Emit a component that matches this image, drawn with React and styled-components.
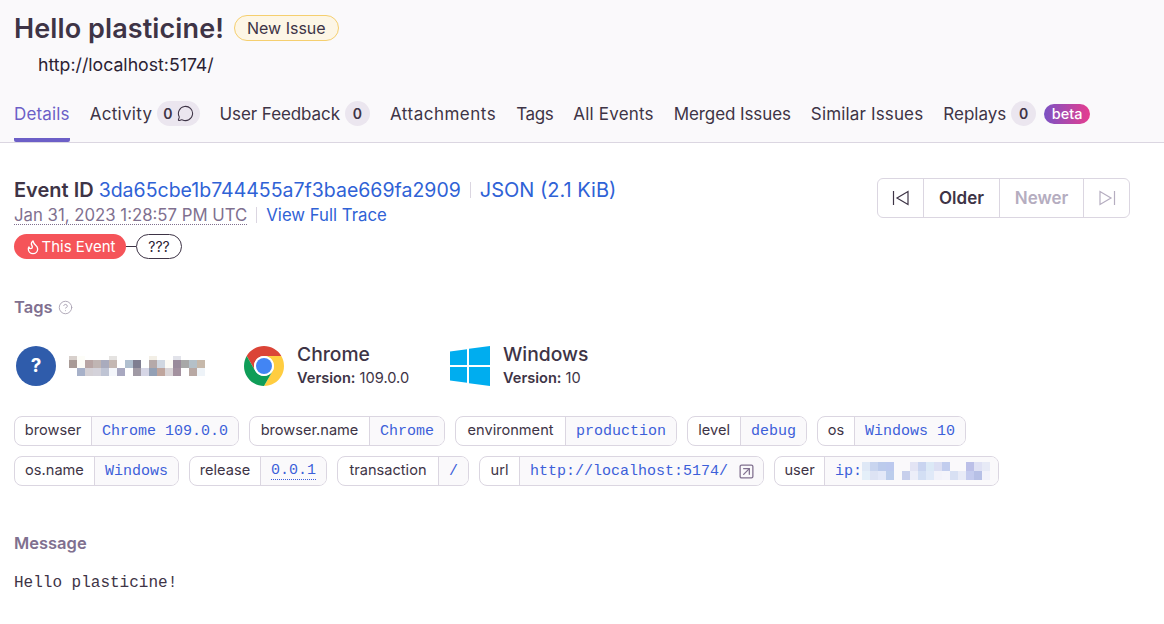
import styled, { createGlobalStyle } from "styled-components"
import { Flame, MessageCircle, CircleHelp, SquareArrowUpRight } from "lucide-react"

const GlobalStyle = createGlobalStyle`
    body{
        margin: 0;
        background-color: #ffffff;
        color: #2b2233;
        font-family: "Inter", "Liberation Sans", sans-serif;
    }
`

const tabs = [
    { label: "Details", active: true, spacing: 0.15 },
    { label: "Activity", count: "0", comment: true, spacing: 0.3 },
    { label: "User Feedback", count: "0", spacing: -0.08 },
    { label: "Attachments", spacing: 0.5 },
    { label: "Tags", spacing: -0.4 },
    { label: "All Events", spacing: 0.2 },
    { label: "Merged Issues", spacing: -0.1 },
    { label: "Similar Issues", spacing: 0.15 },
    { label: "Replays", count: "0", beta: true },
]

const tagRows = [
    [
        { name: "browser", width: 77, value: "Chrome 109.0.0" },
        { name: "browser.name", width: 120, value: "Chrome" },
        { name: "environment", width: 110, value: "production" },
        { name: "level", width: 53, value: "debug" },
        { name: "os", width: 37, value: "Windows 10" },
    ],
    [
        { name: "os.name", width: 80, value: "Windows" },
        { name: "release", width: 71, value: "0.0.1", dotted: true },
        { name: "transaction", width: 101, value: "/" },
        { name: "url", width: 40, value: "http://localhost:5174/", external: true },
        { name: "user", width: 50, value: "ip:", hidden: true },
    ],
]

// pixelated user name: [column, row, colour]
const userPixels = [
    [0, 0, "#d8d0cc"], [1, 0, "#fdfdf8"], [5, 0, "#e5e3e1"], [10, 0, "#f3efe6"], [13, 0, "#e2e3ea"],
    [0, 1, "#a89a96"], [1, 1, "#fdfdf8"], [2, 1, "#b8a5a4"], [3, 1, "#c0b5b3"], [4, 1, "#a9abbd"], [5, 1, "#c4b7b2"],
    [7, 1, "#b0bfcf"], [8, 1, "#7f7e91"], [10, 1, "#b5a9a9"], [11, 1, "#d0d7e1"], [12, 1, "#fcfaf4"],
    [13, 1, "#9a8b9b"], [14, 1, "#a8a8a8"], [15, 1, "#b4c0c8"], [16, 1, "#c6b8aa"],
    [1, 2, "#a7b1c9"], [2, 2, "#d4d0d5"], [3, 2, "#d4d2da"], [4, 2, "#bfc4d4"], [5, 2, "#f4f6fb"], [6, 2, "#a8a8c0"],
    [8, 2, "#a09aa5"], [9, 2, "#d6d6e6"], [10, 2, "#93a0b5"], [11, 2, "#bfa59d"], [12, 2, "#d9d4d7"], [13, 2, "#a3919f"],
    [15, 2, "#b8a8a3"], [16, 2, "#eef3f8"],
]

const ipPixels = [
    [0, 0, "#dfe8f6"], [1, 0, "#c9d5ef"], [2, 0, "#bccbec"], [3, 0, "#bcc9ee"], [6, 0, "#e3e4f4"], [7, 0, "#c9d4f0"],
    [8, 0, "#dce9f6"], [9, 0, "#dcdff3"], [10, 0, "#c2cdee"], [13, 0, "#bcc0e8"], [14, 0, "#dfe1f4"], [15, 0, "#e7eaf6"],
    [0, 1, "#e4eff9"], [1, 1, "#dde3f4"], [2, 1, "#e3e8f8"], [3, 1, "#bccdec"], [5, 1, "#c7cfec"], [6, 1, "#eceef9"],
    [7, 1, "#d3dff4"], [8, 1, "#e0e9f8"], [9, 1, "#f2f2fa"], [10, 1, "#f4f4fb"], [11, 1, "#d8e0f3"], [12, 1, "#e8ebf7"],
    [13, 1, "#c4cbee"], [14, 1, "#b7c0e6"], [15, 1, "#f2f2fa"],
]

export default function App(){
    return(
        <>
        <GlobalStyle />
        <Header>
            <TitleRow>
                <Title>Hello plasticine!</Title>
                <IssueBadge>New Issue</IssueBadge>
            </TitleRow>
            <Culprit>http://localhost:5174/</Culprit>
            <TabList>
                {tabs.map((tab) => <Tab key={tab.label} $active={tab.active}>
                    <TabLabel $spacing={tab.spacing}>{tab.label}</TabLabel>
                    {tab.count && <Count>
                        {tab.count}
                        {tab.comment && <MessageCircle size={17} strokeWidth={1.5} />}
                    </Count>}
                    {tab.beta && <Beta>beta</Beta>}
                </Tab>)}
            </TabList>
        </Header>
        <Main>
            <EventRow>
                <EventInfo>
                    <EventTitle>
                        Event ID <EventLink $size={19.5}>3da65cbe1b744455a7f3bae669fa2909</EventLink>
                        <Divider $tight />
                        <EventLink>JSON (2.1 KiB)</EventLink>
                    </EventTitle>
                    <EventDate>
                        <DateText>Jan 31, 2023 1:28:57 PM UTC</DateText>
                        <Divider />
                        <EventLink>View Full Trace</EventLink>
                    </EventDate>
                    <Trail>
                        <ThisEvent><Flame size={16} strokeWidth={2} />This Event</ThisEvent>
                        <Connector />
                        <Unknown>???</Unknown>
                    </Trail>
                </EventInfo>
                <Pager>
                    <PagerIcon $width={46} $border>
                        <svg width="18" height="16" viewBox="0 0 18 16" fill="none" stroke="#3e3446" strokeWidth="1.2">
                            <path d="M1.5 1v14" />
                            <path d="M16 1.5v13L5 8z" />
                        </svg>
                    </PagerIcon>
                    <PagerButton $width={76}>Older</PagerButton>
                    <PagerButton $width={84} $disabled>Newer</PagerButton>
                    <PagerIcon $width={45}>
                        <svg width="18" height="16" viewBox="0 0 18 16" fill="none" stroke="#b5adc0" strokeWidth="1.2">
                            <path d="M16.5 1v14" />
                            <path d="M2 1.5v13L13 8z" />
                        </svg>
                    </PagerIcon>
                </Pager>
            </EventRow>

            <Heading>Tags <CircleHelp size={15} strokeWidth={1.4} color="#a79fb0" /></Heading>

            <ContextRow>
                <ContextItem $width={228}>
                    <UnknownUser>?</UnknownUser>
                    <svg width="136" height="24" viewBox="0 0 136 24" shapeRendering="crispEdges">
                        {userPixels.map(([x, y, color]) => <rect key={x + "-" + y} x={x * 8} y={y === 0 ? 2 : y === 1 ? 6 : 14} width="8" height={y === 0 ? 4 : 8} fill={color} />)}
                    </svg>
                </ContextItem>
                <ContextItem $width={206}>
                    <svg width="40" height="40" viewBox="0 0 40 40">
                        <path d="M2.68 10A20 20 0 0 1 37.32 10H20A10 10 0 0 0 11.34 25Z" fill="#db4437" />
                        <path d="M2.68 10A20 20 0 0 1 37.32 10H20A10 10 0 0 0 11.34 25Z" fill="#ffcd40" transform="rotate(120 20 20)" />
                        <path d="M2.68 10A20 20 0 0 1 37.32 10H20A10 10 0 0 0 11.34 25Z" fill="#0f9d58" transform="rotate(240 20 20)" />
                        <circle cx="20" cy="20" r="10" fill="#ffffff" />
                        <circle cx="20" cy="20" r="8" fill="#4285f4" />
                    </svg>
                    <div>
                        <ContextName>Chrome</ContextName>
                        <ContextVersion><b>Version:</b> 109.0.0</ContextVersion>
                    </div>
                </ContextItem>
                <ContextItem>
                    <svg width="40" height="40" viewBox="0 0 40 40" fill="#00adef">
                        <path d="M0 5.6L17 3.2V19H0z" />
                        <path d="M19 2.8L40 0V19H19z" />
                        <path d="M0 21H17V36.8L0 34.4z" />
                        <path d="M19 21H40V40L19 37.2z" />
                    </svg>
                    <div>
                        <ContextName>Windows</ContextName>
                        <ContextVersion><b>Version:</b> 10</ContextVersion>
                    </div>
                </ContextItem>
            </ContextRow>

            <TagList>
                {tagRows.map((row, i) => <TagRow key={i}>
                    {row.map((tag) => <TagPill key={tag.name}>
                        <TagKey $width={tag.width}>{tag.name}</TagKey>
                        <TagValue $dotted={tag.dotted} $external={tag.external} $hidden={tag.hidden}>
                            <span>{tag.value}</span>
                            {tag.hidden && <svg width="128" height="20" viewBox="0 0 128 20" shapeRendering="crispEdges">
                                {ipPixels.map(([x, y, color]) => <rect key={x + "-" + y} x={x * 8} y={y * 9 + 1} width="8" height="9" fill={color} />)}
                            </svg>}
                            {tag.external && <SquareArrowUpRight size={17} strokeWidth={1.8} color="#80708f" />}
                        </TagValue>
                    </TagPill>)}
                </TagRow>)}
            </TagList>

            <Heading $message>Message</Heading>
            <Code>Hello plasticine!</Code>
        </Main>
        </>
    )
}

const Header = styled.header`
    height: 130px;
    background-color: #faf9fb;
    border-bottom: 1px solid #dbd6e1;
    padding: 12px 14px 0;
    display: flex;
    flex-direction: column;
`

const TitleRow = styled.div`
    display: flex;
    align-items: center;
    gap: 10px;
    height: 32px;
`

const Title = styled.h1`
    margin: 0;
    font-size: 27px;
    font-weight: 600;
    color: #3e3446;
    letter-spacing: 0.1px;
`

const IssueBadge = styled.span`
    height: 24px;
    padding: 0 12px;
    display: flex;
    align-items: center;
    font-size: 16px;
    color: #3e3446;
    background-color: #fdf6e6;
    border: 1px solid #f5cf6f;
    border-radius: 13px;
`

const Culprit = styled.div`
    margin-top: 10px;
    padding-left: 24px;
    font-size: 17.7px;
    color: #2b2233;
`

const TabList = styled.nav`
    margin-top: auto;
    display: flex;
    gap: 20px;
    height: 53px;
`

const Tab = styled.div`
    height: 100%;
    box-sizing: border-box;
    display: flex;
    align-items: center;
    gap: 5px;
    font-size: 17px;
    color: ${(props) => props.$active ? "#6c5fc7" : "#3e3446"};
    border-bottom: 4px solid ${(props) => props.$active ? "#6c5fc7" : "transparent"};
    border-radius: 0 0 2px 2px;
`

const TabLabel = styled.span`
    letter-spacing: ${(props) => props.$spacing || 0}px;
`

const Count = styled.span`
    min-width: 25px;
    height: 25px;
    box-sizing: border-box;
    padding: 0 6px;
    display: flex;
    align-items: center;
    justify-content: center;
    gap: 4px;
    font-size: 14px;
    font-weight: 600;
    color: #3e3446;
    background-color: #ebe6ef;
    border-radius: 13px;
`

const Beta = styled.span`
    margin-left: 3px;
    width: 46px;
    height: 20px;
    display: flex;
    align-items: center;
    justify-content: center;
    font-size: 14.5px;
    font-weight: 500;
    color: #ffffff;
    background: linear-gradient(90deg, #7b52c4, #e63d8f);
    border-radius: 10px;
`

const Main = styled.main`
    padding: 34px 34px 0 14px;
`

const EventRow = styled.div`
    display: flex;
    justify-content: space-between;
    align-items: flex-start;
`

const EventInfo = styled.div`
    display: flex;
    flex-direction: column;
`

const EventTitle = styled.div`
    height: 26px;
    display: flex;
    align-items: center;
    gap: 5px;
    font-size: 20px;
    font-weight: 600;
    color: #3e3446;
`

const EventLink = styled.a`
    font-weight: 400;
    font-size: ${(props) => props.$size ? props.$size + "px" : "inherit"};
    color: #2f62d6;
`

const Divider = styled.span`
    width: 1px;
    height: 16px;
    margin: 0 ${(props) => props.$tight ? "4px" : "5px"};
    background-color: #dbd6e1;
`

const EventDate = styled.div`
    height: 24px;
    display: flex;
    align-items: center;
    gap: 4px;
    font-size: 16.75px;
`

const DateText = styled.span`
    color: #80708f;
    border-bottom: 1px dotted #80708f;
    line-height: 18px;
`

const Trail = styled.div`
    margin-top: 7px;
    display: flex;
    align-items: center;
`

const ThisEvent = styled.span`
    width: 112px;
    height: 25px;
    box-sizing: border-box;
    display: flex;
    align-items: center;
    justify-content: center;
    gap: 1px;
    font-size: 15px;
    color: #ffffff;
    background-color: #f55459;
    border-radius: 13px;
`

const Connector = styled.span`
    width: 10px;
    height: 1px;
    background-color: #3e3446;
`

const Unknown = styled.span`
    width: 46px;
    height: 25px;
    box-sizing: border-box;
    display: flex;
    align-items: center;
    justify-content: center;
    font-size: 14px;
    color: #2b2233;
    border: 1px solid #3e3446;
    border-radius: 13px;
`

const Pager = styled.div`
    margin-top: 1px;
    height: 40px;
    box-sizing: border-box;
    display: flex;
    border: 1px solid #dbd6e1;
    border-radius: 6px;
`

const PagerIcon = styled.div`
    width: ${(props) => props.$width}px;
    box-sizing: border-box;
    display: flex;
    align-items: center;
    justify-content: center;
    border-right: ${(props) => props.$border ? "1px solid #dbd6e1" : "none"};
`

const PagerButton = styled.div`
    width: ${(props) => props.$width}px;
    box-sizing: border-box;
    display: flex;
    align-items: center;
    justify-content: center;
    font-size: 17px;
    font-weight: 600;
    color: ${(props) => props.$disabled ? "#b5adc0" : "#3e3446"};
    border-right: 1px solid #dbd6e1;
`

const Heading = styled.h3`
    margin: ${(props) => props.$message ? "45px 0 0" : "36px 0 0"};
    height: 24px;
    display: flex;
    align-items: center;
    gap: 5px;
    font-size: 16.5px;
    font-weight: 600;
    color: #80708f;
`

const ContextRow = styled.div`
    margin-top: 27px;
    display: flex;
    padding-left: 2px;
`

const ContextItem = styled.div`
    width: ${(props) => props.$width ? props.$width + "px" : "auto"};
    display: flex;
    align-items: center;
    gap: 13px;
    height: 40px;
`

const UnknownUser = styled.div`
    width: 40px;
    height: 40px;
    padding-bottom: 2px;
    box-sizing: border-box;
    display: flex;
    align-items: center;
    justify-content: center;
    font-size: 19px;
    font-weight: 700;
    color: #ffffff;
    background-color: #2f5cab;
    border-radius: 50%;
`

const ContextName = styled.div`
    font-size: 19.3px;
    font-weight: 500;
    line-height: 24px;
    color: #3e3446;
`

const ContextVersion = styled.div`
    font-size: 14.6px;
    line-height: 24px;
    color: #3e3446;

    b{
        font-weight: 600;
    }
`

const TagList = styled.div`
    margin-top: 30px;
    display: flex;
    flex-direction: column;
    gap: 10px;
`

const TagRow = styled.div`
    display: flex;
    gap: 10px;
`

const TagPill = styled.div`
    height: 30px;
    box-sizing: border-box;
    display: flex;
    border: 1px solid #dbd6e1;
    border-radius: 8px;
    overflow: hidden;
`

const TagKey = styled.div`
    width: ${(props) => props.$width}px;
    box-sizing: border-box;
    padding-bottom: 2px;
    display: flex;
    align-items: center;
    justify-content: center;
    font-size: 14.6px;
    color: #3e3446;
    border-right: 1px solid #dbd6e1;
`

const TagValue = styled.div`
    padding: 0 ${(props) => props.$external || props.$hidden ? "8px" : "10px"} 0 10px;
    display: flex;
    align-items: center;
    gap: ${(props) => props.$external ? "10px" : "0"};
    font-family: "Liberation Mono", monospace;
    font-size: 15px;
    color: #3d5fd9;
    background-color: #faf9fb;

    span{
        border-bottom: ${(props) => props.$dotted ? "1px dotted #3d5fd9" : "none"};
    }
`

const Code = styled.pre`
    margin: 19px 0 0;
    font-family: "Liberation Mono", monospace;
    font-size: 16px;
    color: #3e3446;
`
